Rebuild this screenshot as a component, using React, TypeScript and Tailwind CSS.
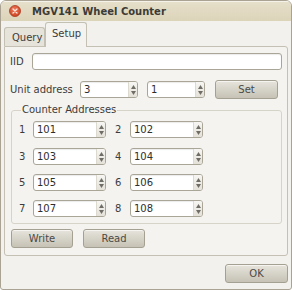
import React from "react";

const font = "font-['DejaVu_Sans',sans-serif]";

function Arrows() {
  return (
    <div className="flex w-[9px] flex-col items-center justify-center gap-[2px] border-l border-[#dcd9cf] bg-gradient-to-b from-[#f7f6f3] to-[#e4e1d8]">
      <svg width="5" height="4" viewBox="0 0 5 4">
        <path d="M2.5 0 L5 4 L0 4 Z" fill="#6f6d66" />
      </svg>
      <svg width="5" height="4" viewBox="0 0 5 4">
        <path d="M0 0 L5 0 L2.5 4 Z" fill="#6f6d66" />
      </svg>
    </div>
  );
}

function Spin({ value, w }: { value: string; w: string }) {
  return (
    <div className={`flex h-[17px] ${w} overflow-hidden rounded-[3px] border border-[#a9a597] bg-white shadow-[inset_0_1px_1px_rgba(0,0,0,0.08)]`}>
      <div className="flex-1 pl-[3px] text-[10px] leading-[15px] text-[#2e2e2e]">{value}</div>
      <Arrows />
    </div>
  );
}

function Btn({ label, w }: { label: string; w: string }) {
  return (
    <div
      className={`flex h-[19px] ${w} items-center justify-center rounded-[3px] border border-[#a5a192] bg-gradient-to-b from-[#e6e4dc] to-[#c6c2b5] text-[10px] text-[#4a4a46] shadow-[inset_0_1px_0_rgba(255,255,255,0.6)]`}
    >
      {label}
    </div>
  );
}

function CounterRow({ a, b, mt }: { a: [string, string]; b: [string, string]; mt: string }) {
  return (
    <div className={`flex h-[17px] items-center ${mt}`}>
      <div className="w-[14px] text-[10px] text-[#3c3c3c]">{a[0]}</div>
      <Spin value={a[1]} w="w-[73px]" />
      <div className="ml-[9px] w-[15px] text-[10px] text-[#3c3c3c]">{b[0]}</div>
      <Spin value={b[1]} w="w-[73px]" />
    </div>
  );
}

export default function App() {
  return (
    <div className={`h-[290px] w-[292px] bg-white ${font}`}>
      <div className="flex h-[290px] w-[292px] flex-col overflow-hidden rounded-t-[6px] rounded-b-[3px] border border-[#aaa394] bg-[#f2f1ed]">
        {/* title bar */}
        <div className="flex h-[20px] shrink-0 items-center bg-gradient-to-b from-[#e6dfca] to-[#dcd4b9] pl-[8px] shadow-[inset_0_1px_0_rgba(255,255,255,0.6)]">
          <svg width="12" height="12" viewBox="0 0 12 12">
            <defs>
              <radialGradient id="cg" cx="0.45" cy="0.35" r="0.7">
                <stop offset="0" stopColor="#f07a5c" />
                <stop offset="1" stopColor="#c9401f" />
              </radialGradient>
            </defs>
            <circle cx="6" cy="6" r="5.5" fill="url(#cg)" stroke="#a8381e" strokeWidth="0.8" />
            <path d="M4 4 L8 8 M8 4 L4 8" stroke="#fbe6de" strokeWidth="1.3" strokeLinecap="round" />
          </svg>
          <span className="ml-[11px] text-[10px] font-bold text-[#3c3b37]">MGV141 Wheel Counter</span>
        </div>

        {/* tabs */}
        <div className="ml-[3px] mt-[1px] flex h-[24px] shrink-0 items-end">
          <div className="flex h-[19px] w-[41px] items-center rounded-t-[3px] border border-b-0 border-[#c4c0b3] bg-[#e6e3da] pl-[7px] text-[10px] text-[#3c3c3c]">
            Query
          </div>
          <div className="relative z-10 -mb-px flex h-[25px] w-[42px] items-center rounded-t-[3px] border border-b-0 border-[#c4c0b3] bg-[#f4f3ef] pl-[6px] pb-[3px] text-[10px] text-[#3c3c3c]">
            Setup
          </div>
        </div>

        {/* panel */}
        <div className="ml-[3px] flex h-[210px] w-[284px] shrink-0 flex-col rounded-b-[3px] rounded-tr-[3px] border border-[#c4c0b3] bg-[#f4f3ef] pl-[5px]">
          <div className="mt-[6px] flex h-[17px] items-center">
            <div className="w-[22px] text-[10px] text-[#3c3c3c]">IID</div>
            <div className="h-[17px] w-[250px] rounded-[3px] border border-[#a9a597] bg-white shadow-[inset_0_1px_1px_rgba(0,0,0,0.08)]" />
          </div>
          <div className="mt-[10px] flex h-[19px] items-center">
            <div className="w-[70px] text-[10px] text-[#3c3c3c]">Unit address</div>
            <Spin value="3" w="w-[58px]" />
            <div className="w-[9px]" />
            <Spin value="1" w="w-[58px]" />
            <div className="w-[10px]" />
            <Btn label="Set" w="w-[63px]" />
          </div>

          <fieldset className="ml-[1px] mt-[5px] w-[271px] rounded-[3px] border border-[#d6d3c9] pb-[6px] pl-[7px]">
            <legend className="ml-[2px] px-[1px] text-[10px] leading-[12px] text-[#3c3c3c]">Counter Addresses</legend>
            <div className="flex flex-col">
              <CounterRow mt="mt-[5px]" a={["1", "101"]} b={["2", "102"]} />
              <CounterRow mt="mt-[10px]" a={["3", "103"]} b={["4", "104"]} />
              <CounterRow mt="mt-[9px]" a={["5", "105"]} b={["6", "106"]} />
              <CounterRow mt="mt-[9px]" a={["7", "107"]} b={["8", "108"]} />
            </div>
          </fieldset>

          <div className="mt-[5px] flex gap-[10px] pl-[1px]">
            <Btn label="Write" w="w-[62px]" />
            <Btn label="Read" w="w-[62px]" />
          </div>
        </div>

        {/* bottom */}
        <div className="mt-[8px] flex justify-end pr-[3px]">
          <Btn label="OK" w="w-[63px]" />
        </div>
      </div>
    </div>
  );
}
